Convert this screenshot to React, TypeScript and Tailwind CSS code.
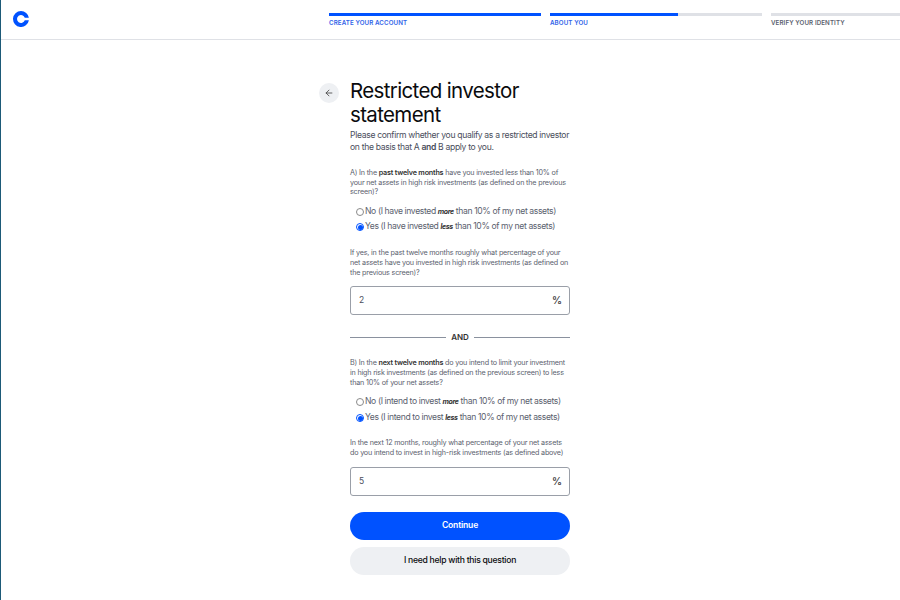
import { ArrowLeft } from "lucide-react";

function Logo() {
  return (
    <svg width="16" height="16" viewBox="0 0 16 16">
      <path
        fillRule="evenodd"
        fill="#0052ff"
        d="M8 0a8 8 0 1 0 7.9 9.3h-4.1a4 4 0 1 1 0-2.6h4.1A8 8 0 0 0 8 0z"
      />
    </svg>
  );
}

function Step({ label, width, progress, active }: { label: string; width: string; progress: string; active?: boolean }) {
  return (
    <div className={`${width} shrink-0`}>
      <div className="h-[3px] bg-[#dfe1e6] mt-[13px]">
        <div className={`h-full bg-[#0052ff] ${progress}`} />
      </div>
      <div className={`mt-[2px] text-[6.2px] leading-[10px] font-semibold tracking-[0.1px] ${active ? "text-[#2f62e8]" : "text-[#5b616e]"}`}>
        {label}
      </div>
    </div>
  );
}

function Radio({ checked, children }: { checked?: boolean; children: React.ReactNode }) {
  return (
    <div className="flex items-center h-[15px]">
      <span
        className={`w-[8px] h-[8px] rounded-full border flex items-center justify-center shrink-0 mr-[1px] mt-[1px] ${
          checked ? "border-[#0052ff]" : "border-[#8a8a8a]"
        }`}
      >
        {checked && <span className="w-[5px] h-[5px] rounded-full bg-[#0052ff]" />}
      </span>
      <span className="text-[8.6px] tracking-[-0.38px] text-[#5b616e] whitespace-nowrap">{children}</span>
    </div>
  );
}

function Emph({ children }: { children: string }) {
  return <i className="font-bold text-[7px] text-[#333]">{children}</i>;
}

function PercentInput({ value }: { value: string }) {
  return (
    <div className="h-[29px] border border-[#9a9fa8] rounded-[3px] flex items-center justify-between pl-[8px] pr-[7px]">
      <span className="text-[8.5px] text-[#4a4e5c]">{value}</span>
      <span className="text-[10px] font-semibold text-[#444]">%</span>
    </div>
  );
}

const small = "text-[7.2px] leading-[9.7px] tracking-[-0.19px] text-[#5b616e]";

export default function App() {
  return (
    <div className="w-[900px] h-[600px] overflow-hidden bg-white border-l border-[#1d5a78] font-['Inter',sans-serif]">
      <header className="h-[40px] border-b border-[#dfe1e6] flex">
        <div className="w-[328px] shrink-0 pl-[12px] pt-[11px]">
          <Logo />
        </div>
        <div className="flex gap-[9px]">
          <Step label="CREATE YOUR ACCOUNT" width="w-[212px]" progress="w-full" active />
          <Step label="ABOUT YOU" width="w-[212px]" progress="w-[128px]" active />
          <Step label="VERIFY YOUR IDENTITY" width="w-[130px]" progress="w-0" />
        </div>
      </header>

      <main className="pl-[318px] pt-[39px] flex items-start">
        <button className="w-[20px] h-[20px] mt-[4px] rounded-full bg-[#eef0f3] flex items-center justify-center shrink-0">
          <ArrowLeft size={10} strokeWidth={2} color="#444" className="-ml-[1px]" />
        </button>
        <div className="w-[220px] ml-[11px]">
          <h1 className="text-[20.5px] leading-[24px] text-[#0a0b0d] tracking-[-0.65px]">Restricted investor statement</h1>
          <p className="mt-[2px] text-[8.6px] leading-[12px] tracking-[-0.33px] text-[#4a4e5c]">
            Please confirm whether you qualify as a restricted investor on the basis that A <b className="font-semibold">and</b> B apply to you.
          </p>

          <p className={`mt-[15px] ${small}`}>
            A) In the <b className="font-semibold text-[#333]">past twelve months</b> have you invested less than 10% of your net assets in high risk investments (as defined on the previous screen)?
          </p>
          <div className="mt-[7px] pl-[6px]">
            <Radio>No (I have invested <Emph>more</Emph> than 10% of my net assets)</Radio>
            <Radio checked>Yes (I have invested <Emph>less</Emph> than 10% of my net assets)</Radio>
          </div>
          <p className={`mt-[14px] ${small}`}>
            If yes, in the past twelve months roughly what percentage of your net assets have you invested in high risk investments (as defined on the previous screen)?
          </p>
          <div className="mt-[9px]">
            <PercentInput value="2" />
          </div>

          <div className="mt-[16px] flex items-center gap-[5px]">
            <div className="flex-1 h-px bg-[#8a919e]" />
            <span className="text-[8px] leading-[12px] font-semibold text-[#333]">AND</span>
            <div className="flex-1 h-px bg-[#8a919e]" />
          </div>

          <p className={`mt-[15px] ${small}`}>
            B) In the <b className="font-semibold text-[#333]">next twelve months</b> do you intend to limit your investment in high risk investments (as defined on the previous screen) to less than 10% of your net assets?
          </p>
          <div className="mt-[7px] pl-[6px]">
            <Radio>No (I intend to invest <Emph>more</Emph> than 10% of my net assets)</Radio>
            <div className="mt-[1px]">
              <Radio checked>Yes (I intend to invest <Emph>less</Emph> than 10% of my net assets)</Radio>
            </div>
          </div>
          <p className={`mt-[13px] ${small}`}>
            In the next 12 months, roughly what percentage of your net assets do you intend to invest in high-risk investments (as defined above)
          </p>
          <div className="mt-[9px]">
            <PercentInput value="5" />
          </div>

          <button className="mt-[16px] w-full h-[28px] rounded-full bg-[#0052ff] text-white text-[8.6px] tracking-[-0.2px] font-semibold">Continue</button>
          <button className="mt-[7px] w-full h-[28px] rounded-full bg-[#eef0f3] text-[#0a0b0d] text-[8.6px] tracking-[-0.26px] font-medium">I need help with this question</button>
        </div>
      </main>
    </div>
  );
}
